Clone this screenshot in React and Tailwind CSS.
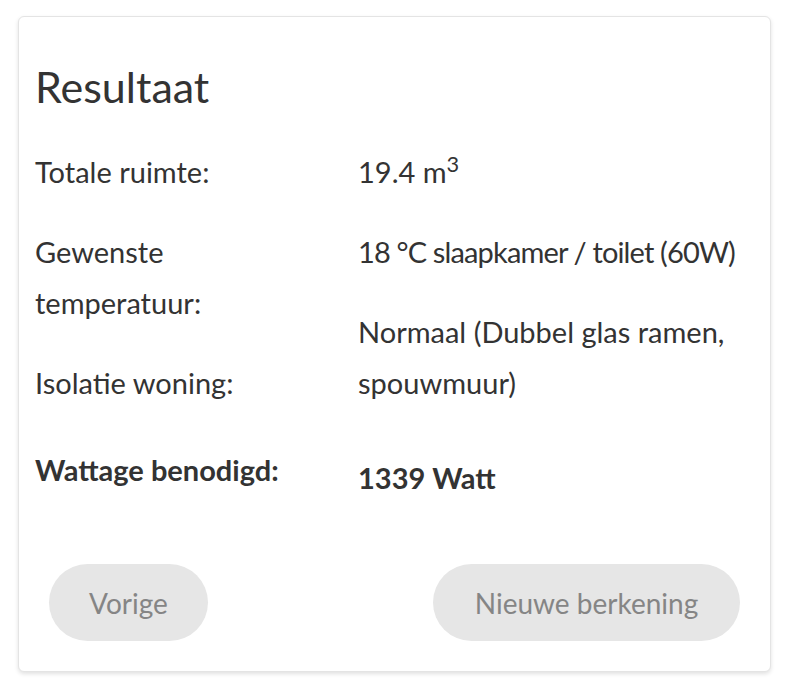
export default function App() {
  const labels = [
    ["Totale ruimte:"],
    ["Gewenste", "temperatuur:"],
    ["Isolatie woning:"],
  ];

  return (
    <div className="min-h-screen bg-white pt-[16px] pl-[18px]" style={{ fontFamily: "Lato, 'Open Sans', sans-serif" }}>
      <div className="w-[753px] h-[656px] rounded-md border border-[#e4e4e4] bg-white shadow-[0_2px_4px_rgba(0,0,0,0.12)] flex flex-col px-[16px] pt-[45px] pb-[30px] text-[#333]">
        <h1 className="text-[43px] leading-[50px] font-normal">Resultaat</h1>

        <div className="flex mt-[34px] text-[29px] leading-[51px]">
          <div className="w-[323px] shrink-0 flex flex-col gap-[29px]">
            {labels.map((l) => (
              <div key={l[0]}>
                {l.map((line) => (
                  <div key={line}>{line}</div>
                ))}
              </div>
            ))}
            <div className="font-bold mt-[7px]">Wattage benodigd:</div>
          </div>

          <div className="flex-1 min-w-0 flex flex-col gap-[29px]">
            <div>
              19.4 m<sup>3</sup>
            </div>
            <div className="whitespace-nowrap tracking-[-0.85px]">18 °C slaapkamer / toilet (60W)</div>
            <div>
              <div>Normaal (Dubbel glas ramen,</div>
              <div>spouwmuur)</div>
            </div>
            <div className="font-bold mt-[15px]">1339 Watt</div>
          </div>
        </div>

        <div className="mt-auto flex justify-between px-[14px]">
          <button className="h-[77px] w-[159px] rounded-full bg-[#e6e6e6] text-[#858585] text-[28px]">
            Vorige
          </button>
          <button className="h-[77px] w-[307px] rounded-full bg-[#e6e6e6] text-[#858585] text-[28px]">
            Nieuwe berkening
          </button>
        </div>
      </div>
    </div>
  );
}
